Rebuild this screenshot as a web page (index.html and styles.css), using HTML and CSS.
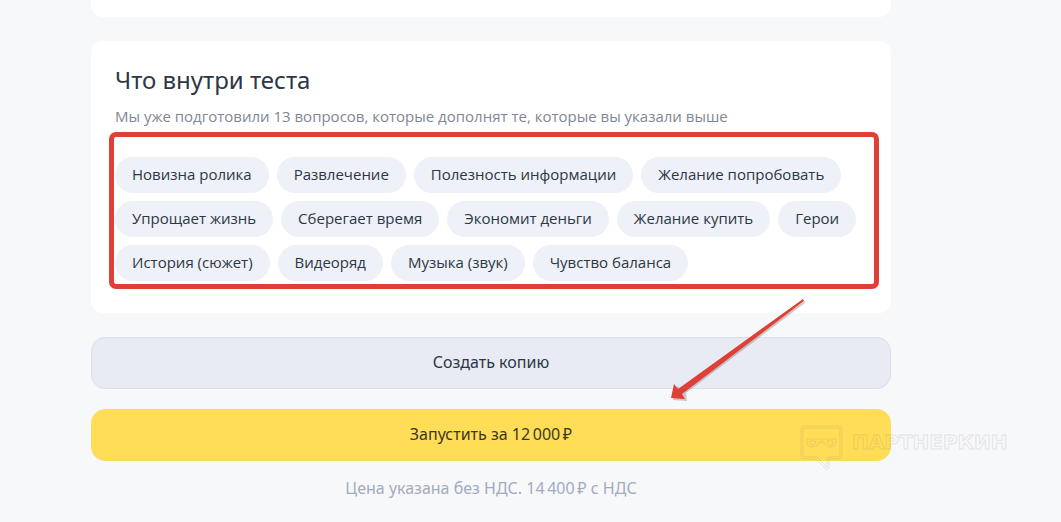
FILE: index.html
```html
<!doctype html>
<html lang="ru">
<head>
  <meta charset="UTF-8"/>
  <meta content="width=device-width, initial-scale=1" name="viewport">
  <title>Что внутри теста</title>
  <link rel="stylesheet" href="styles.css">
</head>
<body>
<main class="page">
  <section class="card card-previous"></section>

  <section class="card">
    <h2 class="card-title">Что внутри теста</h2>
    <p class="card-text">Мы уже подготовили 13 вопросов, которые дополнят те, которые вы указали выше</p>
    <div class="questions">
      <ul class="tags">
        <li>Новизна ролика</li>
        <li>Развлечение</li>
        <li>Полезность информации</li>
        <li>Желание попробовать</li>
        <li>Упрощает жизнь</li>
        <li>Сберегает время</li>
        <li>Экономит деньги</li>
        <li>Желание купить</li>
        <li>Герои</li>
        <li>История (сюжет)</li>
        <li>Видеоряд</li>
        <li>Музыка (звук)</li>
        <li>Чувство баланса</li>
      </ul>
      <div class="frame"></div>
    </div>
  </section>

  <div class="actions">
    <button class="button" type="button">Создать копию</button>
    <button class="button button-primary" type="button">Запустить за 12&#8239;000&#8239;₽</button>
    <svg class="arrow" width="140" height="106" viewBox="0 0 140 106" aria-hidden="true">
      <path class="arrow-shadow" d="M136 2 L136 4 L17 94 L18 102 L4 101 L8 87 L12 90 Z"/>
      <path class="arrow-body" d="M134 0 L135 2 L13 95 L16 100 L2 99 L5 85 L9 90 Z"/>
    </svg>
  </div>
  <p class="note">Цена указана без НДС. 14&#8239;400&#8239;₽ с НДС</p>
</main>

<div class="watermark">
  <svg width="44" height="46" viewBox="0 0 44 46" aria-hidden="true">
    <path d="M4 1 H38 Q42 1 42 5 V30 Q42 34 38 34 H29 V42 Q28 46 25 43 L16 34 H5 Q1 34 1 30 V5 Q1 1 4 1 Z"/>
    <path d="M6 3 H37 Q40 3 40 6 V29 Q40 32 37 32 H27 V42 L17 32 H6 Q3 32 3 29 V6 Q3 3 6 3 Z"/>
    <path d="M7 14 H36 V18 Q35 22 31 22 Q25 22 24 17 H19 Q18 22 12 22 Q7 22 7 17 Z"/>
    <path d="M10 16 H16 Q16 20 12 20 Q9 20 10 16 Z M27 16 H33 Q34 20 31 20 Q27 20 27 16 Z"/>
  </svg>
  <span>ПАРТНЕРКИН</span>
</div>
</body>
</html>
```
FILE: styles.css
```css
*, *:before {
  box-sizing: border-box;
}

body {
  position: relative;
  margin: 0;
  background: #f7f8fa;
  color: #2c3746;
  font-family: "Noto Sans", "Open Sans", sans-serif;
  font-size: 16px;
  line-height: 24px;
}

.page {
  max-width: 800px;
  margin-left: 91px;
}

.card {
  margin-bottom: 24px;
  padding: 23px 24px 32px;
  background: #fff;
  border-radius: 12px;
}

.card-previous {
  height: 17px;
  padding: 0;
  border-radius: 0 0 12px 12px;
}

.card-title {
  margin: 0 0 8px;
  font-size: 24px;
  font-weight: 400;
  line-height: 32px;
}

.card-text,
.tags {
  font-family: "Open Sans", "Noto Sans", sans-serif;
  font-size: 15px;
}

.card-text {
  margin: 0 0 29px;
  color: #7f8794;
}

.questions {
  position: relative;
}

.tags {
  display: flex;
  flex-wrap: wrap;
  gap: 8px;
  margin: 0;
  padding: 0;
  list-style: none;
}

.tags li {
  padding: 5px 17px 7px;
  border-radius: 18px;
  background: #eef1f7;
}

/* red marker around the tag list */
.frame {
  position: absolute;
  top: -25px;
  right: -12px;
  bottom: -8px;
  left: -6px;
  border: 5px solid #df4035;
  border-radius: 7px;
}

.actions {
  position: relative;
  display: flex;
  flex-direction: column;
  gap: 20px;
}

.button {
  height: 52px;
  padding: 0 16px 2px;
  border: 1px solid #dcdfea;
  border-radius: 14px;
  background: #e8ebf4;
  color: #2c3746;
  font: inherit;
  cursor: pointer;
}

.button-primary {
  border-color: #ffdd57;
  background: #ffdd57;
  color: #3b3823;
}

.arrow {
  position: absolute;
  top: -38px;
  right: 82px;
}

.arrow-body {
  fill: #df4035;
}

.arrow-shadow {
  fill: #7c6468;
  opacity: .35;
}

.note {
  margin: 15px 0 0;
  padding-bottom: 22px;
  color: #a3abbd;
  text-align: center;
}

.watermark {
  position: absolute;
  top: 425px;
  left: 800px;
  display: flex;
  gap: 8px;
  color: transparent;
  font-family: "DejaVu Sans", sans-serif;
  font-size: 20px;
  font-weight: 700;
  line-height: 34px;
  -webkit-text-stroke: 1px rgba(120, 120, 120, .18);
  pointer-events: none;
}

.watermark svg {
  fill: none;
  stroke: rgba(120, 120, 120, .16);
}
```
